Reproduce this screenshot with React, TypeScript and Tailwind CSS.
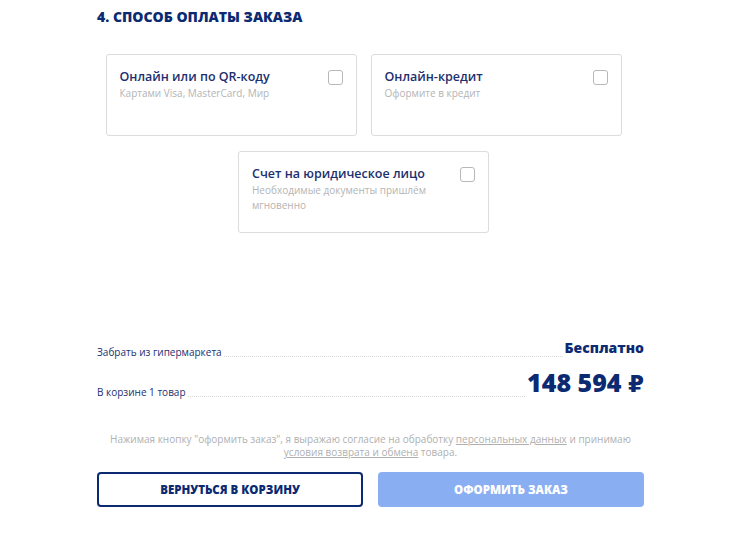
import React from "react";

const options = [
  { title: "Онлайн или по QR-коду", text: "Картами Visa, MasterCard, Мир" },
  { title: "Онлайн-кредит", text: "Оформите в кредит" },
];

function PayCard({ title, text }: { title: string; text: string }) {
  return (
    <div className="w-[251px] h-[82px] border border-[#dcdcdc] rounded-[3px] pl-[13px] pr-[13px] pt-[13px] flex justify-between">
      <div>
        <div className="text-[12.5px] leading-[17px] font-semibold text-[#1c2f6e]">{title}</div>
        <div className="mt-[1px] text-[10px] leading-[15px] text-[#b4b4b4] w-[200px]">{text}</div>
      </div>
      <div className="w-[15px] h-[15px] mt-[2px] border border-[#b8b8b8] rounded-[3px] shrink-0" />
    </div>
  );
}

function Row({ label, children, big }: { label: string; children: React.ReactNode; big?: boolean }) {
  return (
    <div className="flex items-end">
      <span className="text-[10px] leading-[14px] text-[#1c2f6e] whitespace-nowrap">{label}</span>
      <span className="flex-1 border-b border-dotted border-[#d8d8d8] mx-[2px] mb-[2px]" />
      <span
        className={
          big
            ? "text-[25px] leading-[28px] font-extrabold text-[#0c2a72] whitespace-nowrap mb-[1px]"
            : "text-[14px] leading-[18px] font-extrabold text-[#0c2a72] whitespace-nowrap mb-[2px]"
        }
      >
        {children}
      </span>
    </div>
  );
}

export default function App() {
  return (
    <div className="w-[752px] h-[535px] bg-white font-['Open_Sans',sans-serif] overflow-hidden">
      <div className="w-[547px] ml-[97px] pt-[7px]">
        <h2 className="text-[14px] leading-[20px] font-extrabold text-[#0c2a72] uppercase">4. Способ оплаты заказа</h2>

        <div className="w-[517px] ml-[8px] mt-[27px] flex flex-col items-center gap-[15px]">
          <div className="flex gap-[14px]">
            {options.map((o) => (
              <PayCard key={o.title} title={o.title} text={o.text} />
            ))}
          </div>
          <PayCard title="Счет на юридическое лицо" text="Необходимые документы пришлём мгновенно" />
        </div>

        <div className="mt-[106px] flex flex-col gap-[9px]">
          <Row label="Забрать из гипермаркета">Бесплатно</Row>
          <Row label="В корзине 1 товар" big>
            148 594 <span className="font-['DejaVu_Sans',sans-serif] font-bold text-[23px]">₽</span>
          </Row>
        </div>

        <p className="mt-[34px] text-center text-[10px] leading-[13px] text-[#b0b0b0] px-[4px]">
          Нажимая кнопку "оформить заказ", я выражаю согласие на обработку{" "}
          <span className="underline">персональных данных</span> и принимаю{" "}
          <span className="underline">условия возврата и обмена</span> товара.
        </p>

        <div className="mt-[13px] flex gap-[15px]">
          <button className="w-[266px] h-[35px] border-2 border-[#0c2a72] rounded-[4px] bg-white text-[11.5px] font-extrabold text-[#0c2a72] uppercase">
            Вернуться в корзину
          </button>
          <button className="w-[266px] h-[35px] rounded-[4px] bg-[#8aaef2] text-[11.5px] font-extrabold text-white uppercase">
            Оформить заказ
          </button>
        </div>
      </div>
    </div>
  );
}
